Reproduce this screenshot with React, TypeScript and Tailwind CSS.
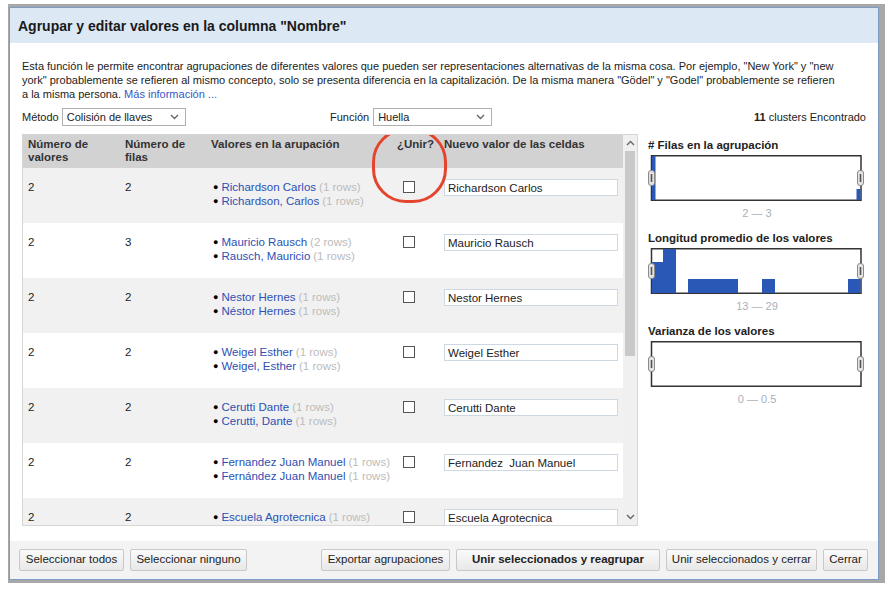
import React from "react";

type Row = {
  vals: string;
  rows: string;
  items: { name: string; count: string }[];
  value: string;
};

const data: Row[] = [
  { vals: "2", rows: "2", items: [{ name: "Richardson Carlos", count: "(1 rows)" }, { name: "Richardson, Carlos", count: "(1 rows)" }], value: "Richardson Carlos" },
  { vals: "2", rows: "3", items: [{ name: "Mauricio Rausch", count: "(2 rows)" }, { name: "Rausch, Mauricio", count: "(1 rows)" }], value: "Mauricio Rausch" },
  { vals: "2", rows: "2", items: [{ name: "Nestor Hernes", count: "(1 rows)" }, { name: "Néstor Hernes", count: "(1 rows)" }], value: "Nestor Hernes" },
  { vals: "2", rows: "2", items: [{ name: "Weigel Esther", count: "(1 rows)" }, { name: "Weigel, Esther", count: "(1 rows)" }], value: "Weigel Esther" },
  { vals: "2", rows: "2", items: [{ name: "Cerutti Dante", count: "(1 rows)" }, { name: "Cerutti, Dante", count: "(1 rows)" }], value: "Cerutti Dante" },
  { vals: "2", rows: "2", items: [{ name: "Fernandez Juan Manuel", count: "(1 rows)" }, { name: "Fernández Juan Manuel", count: "(1 rows)" }], value: "Fernandez\u00a0 Juan Manuel" },
  { vals: "2", rows: "2", items: [{ name: "Escuela Agrotecnica", count: "(1 rows)" }, { name: "Escuela Agrotécnica", count: "(1 rows)" }], value: "Escuela Agrotecnica" },
];

function Chevron({ up }: { up?: boolean }) {
  return (
    <svg width="9" height="6" viewBox="0 0 9 6" className="text-[#666]">
      <path d={up ? "M1 5 L4.5 1.5 L8 5" : "M1 1 L4.5 4.5 L8 1"} fill="none" stroke="currentColor" strokeWidth="1.4" />
    </svg>
  );
}

function Select({ label, width }: { label: string; width: string }) {
  return (
    <div className={`flex h-[18px] items-center justify-between border border-[#b0b0b0] bg-white pl-[4px] pr-[6px] ${width}`}>
      <span>{label}</span>
      <Chevron />
    </div>
  );
}

function Handle({ x }: { x: number }) {
  return (
    <g>
      <rect x={x} y={15.5} width={6} height={15} rx={2.5} fill="#e4e4e4" stroke="#8a8a8a" />
      <line x1={x + 3} y1={19} x2={x + 3} y2={27} stroke="#555" strokeWidth="1.6" />
    </g>
  );
}

function Chart({ bars }: { bars: [number, number, number][] }) {
  return (
    <svg width="218" height="46" viewBox="0 0 218 46" className="block">
      <rect x={3.5} y={0.75} width={209.5} height={44.5} fill="#fff" stroke="#333" strokeWidth="1.5" />
      {bars.map(([x1, x2, y], i) => (
        <rect key={i} x={x1} y={y} width={x2 - x1} height={45 - y} fill="#2a58b6" />
      ))}
      <Handle x={0.5} />
      <Handle x={209.5} />
    </svg>
  );
}

function Button({ children, w, bold }: { children: React.ReactNode; w: string; bold?: boolean }) {
  return (
    <div
      className={`flex h-[22px] items-center justify-center rounded-[2px] border border-[#c8c8c8] bg-gradient-to-b from-[#fafafa] to-[#e8e8e8] text-[#222] ${w} ${bold ? "font-bold" : ""}`}
    >
      {children}
    </div>
  );
}

export default function App() {
  return (
    <div className="h-[591px] w-[894px] overflow-hidden bg-white pt-[4px] pl-[8px] text-[11px] text-[#222]" style={{ fontFamily: '"Liberation Sans", Arial, sans-serif' }}>
      <div className="h-[579px] w-[877px] bg-[#a8a8a8] pt-[3px] pl-[1px] pr-[6px] pb-[3px]">
        <div className="relative flex h-full flex-col border border-[#7d9cbf] bg-white">
          {/* Title */}
          <div className="flex h-[35px] shrink-0 items-center bg-[#dce8f4] pl-[8px] pt-[2px] text-[14px] font-bold text-[#1a1a1a]">
            Agrupar y editar valores en la columna "Nombre"
          </div>

          <div className="flex flex-1 flex-col px-[12px]">
            {/* Description */}
            <p className="mt-[16px] whitespace-nowrap text-[11px] leading-[14px]">
              Esta función le permite encontrar agrupaciones de diferentes valores que pueden ser representaciones alternativas de la misma cosa. Por ejemplo, "New York" y "new
              <br />
              york" probablemente se refieren al mismo concepto, solo se presenta diferencia en la capitalización. De la misma manera "Gödel" y "Godel" probablemente se refieren
              <br />
              a la misma persona. <span className="text-[#3358c4]">Más información ...</span>
            </p>

            {/* Method row */}
            <div className="mt-[7px] flex h-[18px] items-center">
              <div className="flex w-[308px] items-center gap-[3px]">
                <span>Método</span>
                <Select label="Colisión de llaves" width="w-[124px]" />
              </div>
              <div className="flex items-center gap-[4px]">
                <span>Función</span>
                <Select label="Huella" width="w-[119px]" />
              </div>
              <div className="flex-1 text-right">
                <b>11</b> clusters Encontrado
              </div>
            </div>

            {/* Main */}
            <div className="mt-[8px] flex gap-[10px]">
              {/* Table */}
              <div className="relative flex h-[392px] w-[616px] overflow-hidden border border-[#d6d6d6]">
                <div className="flex w-[600px] flex-col">
                  <div className="grid h-[33px] shrink-0 grid-cols-[97px_86px_185px_48px_184px] bg-[#d2d2d2] pt-[3px] text-[11.5px] font-bold leading-[13px] text-[#333]">
                    <div className="pl-[5px]">Número de<br />valores</div>
                    <div className="pl-[5px]">Número de<br />filas</div>
                    <div className="pl-[5px]">Valores en la arupación</div>
                    <div className="pl-[6px]">¿Unir?</div>
                    <div className="pl-[5px]">Nuevo valor de las celdas</div>
                  </div>
                  {data.map((r, i) => (
                    <div
                      key={i}
                      className={`grid h-[55px] shrink-0 grid-cols-[97px_86px_185px_48px_184px] pt-[12px] text-[11.5px] leading-[14px] ${i % 2 === 0 ? "bg-[#f1f1f1]" : "bg-white"}`}
                    >
                      <div className="pl-[5px]">{r.vals}</div>
                      <div className="pl-[5px]">{r.rows}</div>
                      <div className="pl-[7px]">
                        {r.items.map((it, j) => (
                          <div key={j} className="flex items-center gap-[3px] whitespace-nowrap">
                            <span className="text-[9px] text-black">●</span>
                            <span className="text-[#2d50b4]">{it.name}</span>
                            <span className="text-[#bcbcbc]">{it.count}</span>
                          </div>
                        ))}
                      </div>
                      <div className="pl-[12px] pt-[1px]">
                        <div className="h-[12px] w-[12px] border-[1.5px] border-[#555] bg-white" />
                      </div>
                      <div className="pl-[5px]">
                        <div className="-mt-[1px] flex h-[17px] w-[174px] items-center border border-[#cdd8e2] bg-white pl-[3px] whitespace-pre">
                          {r.value}
                        </div>
                      </div>
                    </div>
                  ))}
                </div>
                {/* Scrollbar */}
                <div className="flex w-[16px] flex-col items-center bg-[#f0f0f0]">
                  <div className="flex h-[16px] items-center justify-center">
                    <Chevron up />
                  </div>
                  <div className="h-[205px] w-[10px] bg-[#c9c9c9]" />
                  <div className="flex-1" />
                  <div className="flex h-[16px] items-center justify-center">
                    <Chevron />
                  </div>
                </div>
                {/* Red annotation */}
                <div className="absolute left-[349px] top-[-7px] h-[75px] w-[75px] rounded-[34px] border-[3px] border-[#e4432d]" />
              </div>

              {/* Facets */}
              <div className="flex w-[218px] flex-col pt-[4px]">
                <div className="text-[11.5px] font-bold leading-[14px]">
                  # Filas en la agrupación
                </div>
                <div className="mt-[3px]">
                  <Chart bars={[[4, 7.5, 1], [208.5, 212.5, 34]]} />
                </div>
                <div className="mt-[5px] text-center leading-[14px] text-[#a9b0b8]">2 — 3</div>

                <div className="mt-[11px] text-[11.5px] font-bold leading-[14px]">
                  Longitud promedio de los valores
                </div>
                <div className="mt-[3px]">
                  <Chart bars={[[4, 15, 14], [15, 28, 1], [40, 90, 31], [114, 127, 31], [200, 212.5, 31]]} />
                </div>
                <div className="mt-[5px] text-center leading-[14px] text-[#a9b0b8]">13 — 29</div>

                <div className="mt-[11px] text-[11.5px] font-bold leading-[14px]">
                  Varianza de los valores
                </div>
                <div className="mt-[3px]">
                  <Chart bars={[]} />
                </div>
                <div className="mt-[5px] text-center leading-[14px] text-[#a9b0b8]">0 — 0.5</div>
              </div>
            </div>
          </div>

          {/* Footer */}
          <div className="flex h-[38px] shrink-0 items-center bg-[#f3f3f3] pl-[9px] pr-[10px] text-[11.5px]">
            <div className="flex gap-[6px]">
              <Button w="w-[105px]">Seleccionar todos</Button>
              <Button w="w-[117px]">Seleccionar ninguno</Button>
            </div>
            <div className="flex-1" />
            <div className="flex gap-[6px]">
              <Button w="w-[129px]">Exportar agrupaciones</Button>
              <Button w="w-[204px]" bold>Unir seleccionados y reagrupar</Button>
              <Button w="w-[151px]">Unir seleccionados y cerrar</Button>
              <Button w="w-[45px]">Cerrar</Button>
            </div>
          </div>
        </div>
      </div>
    </div>
  );
}
